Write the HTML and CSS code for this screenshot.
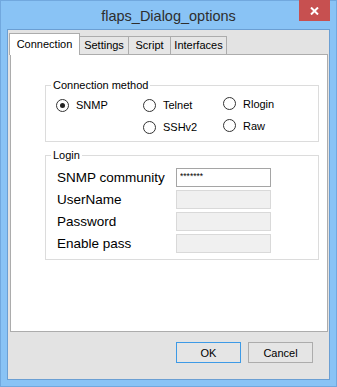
FILE: index.html
```html
<!DOCTYPE html>
<html lang="en">
<head>
    <meta charset="UTF-8">
    <title>flaps_Dialog_options</title>
    <link rel="stylesheet" href="styles.css">
</head>
<body>
    <div class="window">
        <div class="titlebar">
            <span class="title">flaps_Dialog_options</span>
            <button class="close-btn" aria-label="Close">
                <svg width="9" height="8" viewBox="0 0 9 8"><path d="M1 0.5 L8 7.5 M8 0.5 L1 7.5" stroke="#fff" stroke-width="2"/></svg>
            </button>
        </div>

        <div class="client">
            <div class="tabs">
                <div class="tab active tab-connection">Connection</div>
                <div class="tab tab-settings">Settings</div>
                <div class="tab tab-script">Script</div>
                <div class="tab tab-interfaces">Interfaces</div>
            </div>

            <div class="panel">
                <fieldset class="group method">
                    <legend>Connection method</legend>
                    <div class="radio-grid">
                        <label class="radio-option"><span class="radio checked"></span>SNMP</label>
                        <label class="radio-option"><span class="radio"></span>Telnet</label>
                        <label class="radio-option raised"><span class="radio"></span>Rlogin</label>
                        <label class="radio-option second-col"><span class="radio"></span>SSHv2</label>
                        <label class="radio-option raised"><span class="radio"></span>Raw</label>
                    </div>
                </fieldset>

                <fieldset class="group login">
                    <legend>Login</legend>
                    <div class="form-row">
                        <label>SNMP community</label>
                        <input class="field enabled" type="text" value="*******">
                    </div>
                    <div class="form-row">
                        <label>UserName</label>
                        <input class="field" type="text" disabled>
                    </div>
                    <div class="form-row">
                        <label>Password</label>
                        <input class="field" type="text" disabled>
                    </div>
                    <div class="form-row">
                        <label>Enable pass</label>
                        <input class="field" type="text" disabled>
                    </div>
                </fieldset>
            </div>

            <div class="buttons">
                <button class="btn default">OK</button>
                <button class="btn">Cancel</button>
            </div>
        </div>
    </div>
</body>
</html>
```

FILE: styles.css
```css
body {
    margin: 0;
    font-family: "Liberation Sans", Arial, sans-serif;
}
.window {
    position: relative;
    width: 337px;
    height: 387px;
    box-sizing: border-box;
    border: 1px solid #71a8de;
    background: #89c3f5;
}
.titlebar {
    height: 28px;
    display: flex;
    align-items: center;
    justify-content: center;
}
.title {
    font-size: 14.5px;
    color: #2e2e2e;
    padding-top: 2px;
}
.close-btn {
    position: absolute;
    top: -1px;
    right: 6px;
    width: 31px;
    height: 21px;
    padding: 0;
    border: none;
    background: #c75050;
    display: flex;
    align-items: center;
    justify-content: center;
}
.client {
    margin: 0 6px;
    height: 351px;
    box-sizing: border-box;
    border: 1px solid #6b9fd3;
    background: #e3e3e3;
}
.tabs {
    display: flex;
    align-items: flex-end;
    height: 24px;
    box-sizing: border-box;
    padding: 3px 0 0 1px;
}
.tab {
    height: 18px;
    box-sizing: border-box;
    margin-left: -1px;
    border: 1px solid #acacac;
    border-bottom: none;
    background: #e6e6e6;
    font-size: 11px;
    line-height: 17px;
    text-align: center;
    color: #000;
}
.tab.active {
    position: relative;
    z-index: 1;
    height: 22px;
    margin-left: 0;
    margin-bottom: -1px;
    line-height: 20px;
    background: #fff;
}
.tab-connection { width: 71px; }
.tab-settings { width: 50px; }
.tab-script { width: 43px; }
.tab-interfaces { width: 57px; }
.panel {
    height: 278px;
    box-sizing: border-box;
    margin: 0 1px 0 2px;
    border: 1px solid #acacac;
    background: #fff;
    padding-top: 23px;
}
.group {
    margin: 0 8px 0 34px;
    border: 1px solid #dcdcdc;
    min-width: 0;
}
.group legend {
    font-size: 11px;
    line-height: 14px;
    padding: 0 2px;
    color: #000;
}
.method {
    padding: 2px 0 3px 10px;
}
.method legend {
    margin-left: -5px;
}
.login {
    margin-top: 6px;
    padding: 6px 0 6px 11px;
}
.login legend {
    margin-left: -6px;
}
.radio-grid {
    display: grid;
    grid-template-columns: 87px 80px auto;
    grid-auto-rows: 22px;
}
.radio-option {
    display: flex;
    align-items: center;
    gap: 7px;
    font-size: 11px;
    color: #000;
}
.radio-option.second-col {
    grid-column-start: 2;
}
.radio-option.raised {
    margin-bottom: 3px;
}
.radio {
    width: 13px;
    height: 13px;
    box-sizing: border-box;
    border: 1px solid #333;
    border-radius: 50%;
    background: #fff;
    display: flex;
    align-items: center;
    justify-content: center;
}
.radio.checked::after {
    content: "";
    width: 5px;
    height: 5px;
    border-radius: 50%;
    background: #222;
}
.form-row {
    display: flex;
    align-items: center;
    height: 19px;
}
.form-row + .form-row {
    margin-top: 3px;
}
.form-row label {
    width: 119px;
    font-size: 13.5px;
    color: #000;
}
.field {
    width: 95px;
    height: 19px;
    box-sizing: border-box;
    margin: 0;
    padding: 0 3px;
    border: 1px solid #d9d9d9;
    background: #f0f0f0;
    font-family: "Liberation Sans", Arial, sans-serif;
    font-size: 8.5px;
    color: #000;
    outline: none;
}
.field.enabled {
    border-color: #a5a5a5;
    background: #fff;
    padding-bottom: 4px;
}
.buttons {
    display: flex;
    justify-content: flex-end;
    gap: 7px;
    margin-top: 10px;
    padding-right: 16px;
}
.btn {
    width: 65px;
    height: 21px;
    padding: 0;
    border: 1px solid #acacac;
    background: #e5e5e5;
    font-family: "Liberation Sans", Arial, sans-serif;
    font-size: 11px;
    color: #000;
}
.btn.default {
    border-color: #3d9ae6;
}
```
